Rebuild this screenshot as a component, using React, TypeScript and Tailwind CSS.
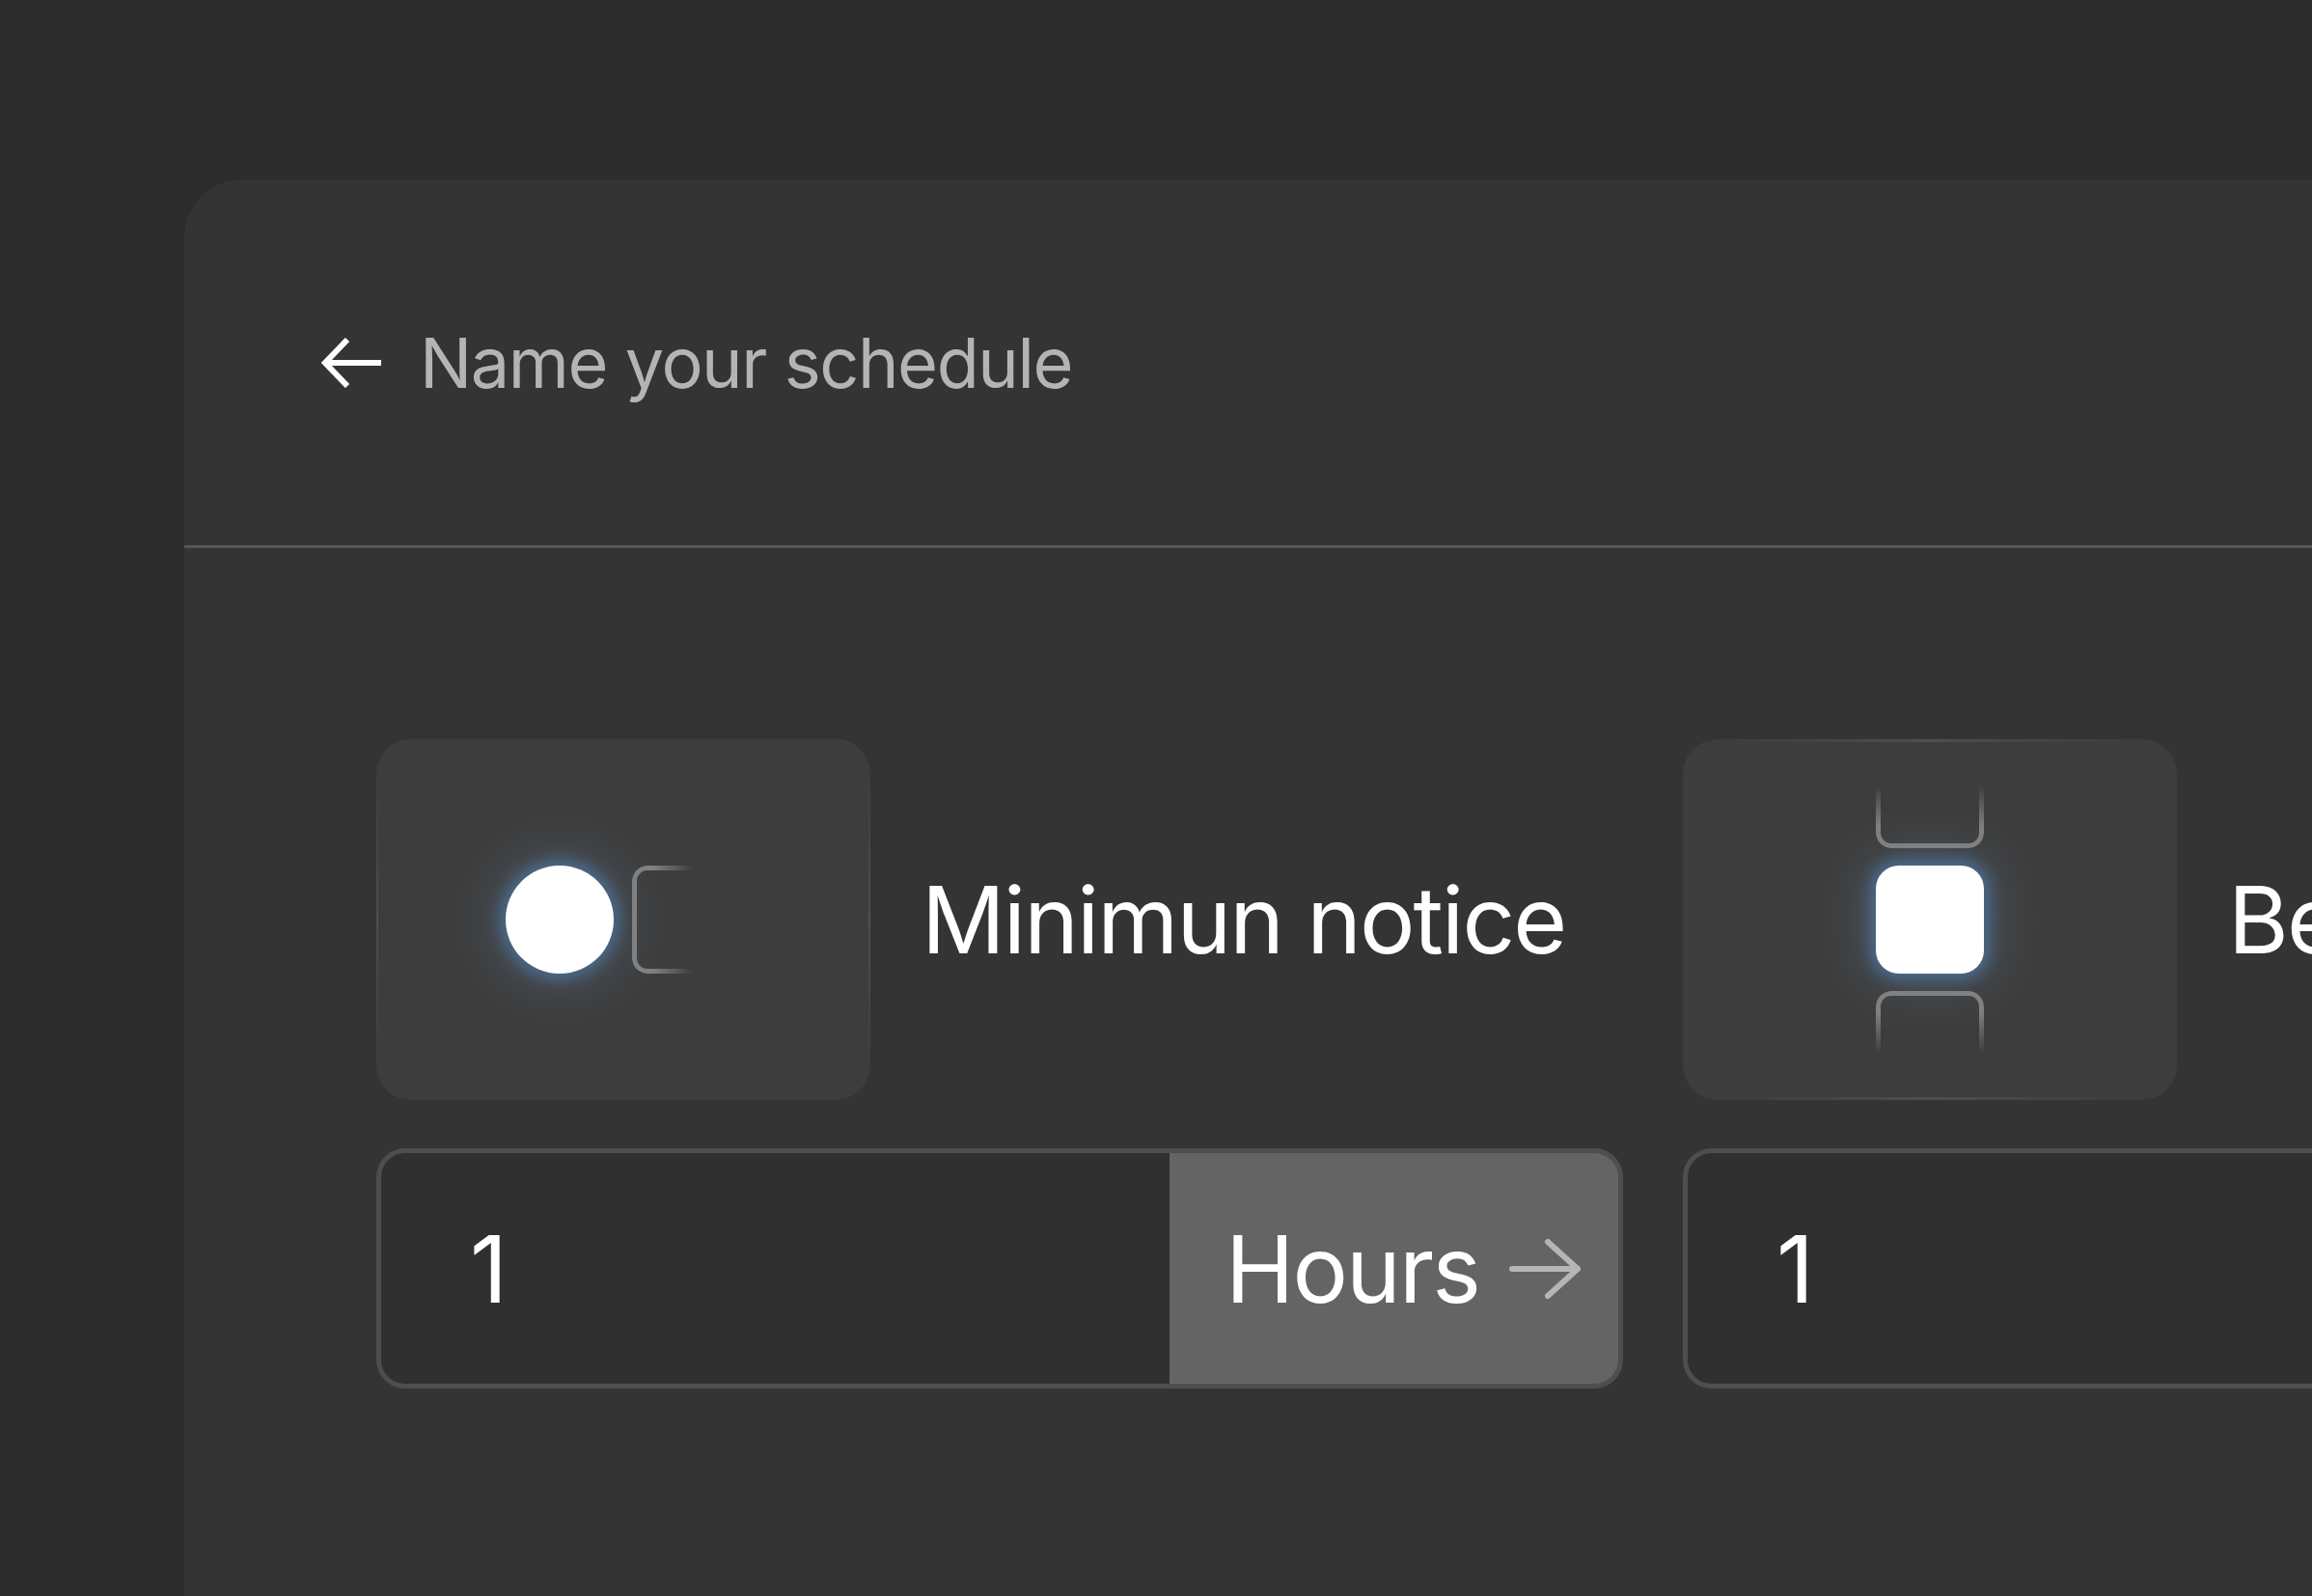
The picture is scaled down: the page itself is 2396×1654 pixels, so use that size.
import React from 'react';

const font = "font-['Inter',sans-serif]";

function EdgeLines({ dir }: { dir: 'x' | 'y' }) {
  if (dir === 'y') {
    return (
      <>
        <div className="absolute left-0 top-[10%] h-[80%] w-[2px] bg-gradient-to-b from-transparent via-[#4a5056] to-transparent" />
        <div className="absolute right-0 top-[10%] h-[80%] w-[2px] bg-gradient-to-b from-transparent via-[#4a5056] to-transparent" />
      </>
    );
  }
  return (
    <>
      <div className="absolute top-0 left-[10%] w-[80%] h-[3px] bg-gradient-to-r from-transparent via-[#4a5056] to-transparent" />
      <div className="absolute bottom-0 left-[10%] w-[80%] h-[3px] bg-gradient-to-r from-transparent via-[#4a5056] to-transparent" />
    </>
  );
}

function ArrowRightIcon() {
  return (
    <svg width="76" height="64" viewBox="0 0 76 64" fill="none" stroke="#b5b5b5" strokeWidth="6" strokeLinecap="round" strokeLinejoin="round">
      <path d="M4 32H72" />
      <path d="M41 4L72 32L41 60" />
    </svg>
  );
}

function MinimumIcon() {
  return (
    <div className="relative w-[512px] h-[374px] shrink-0 rounded-[36px] bg-[#3d3d3d]">
      <EdgeLines dir="y" />
      <div className="h-full flex items-center pl-[134px] gap-[19px]">
        <div className="w-[112px] h-[112px] rounded-full bg-white shadow-[0_0_14px_6px_rgba(74,110,145,0.9),0_0_50px_14px_rgba(110,150,190,0.28)]" />
        <div className="w-[64px] h-[112px] rounded-l-[16px] border-[5px] border-r-0 border-[#808080] [mask-image:linear-gradient(to_right,black_35%,transparent)]" />
      </div>
    </div>
  );
}

function BufferIcon() {
  return (
    <div className="relative w-[512px] h-[374px] shrink-0 rounded-[36px] bg-[#3d3d3d]">
      <EdgeLines dir="x" />
      <div className="h-full flex flex-col items-center justify-center gap-[18px]">
        <div className="w-[112px] h-[65px] rounded-b-[16px] border-[5px] border-t-0 border-[#808080] [mask-image:linear-gradient(to_top,black_35%,transparent)]" />
        <div className="w-[112px] h-[112px] rounded-[24px] bg-white shadow-[0_0_14px_6px_rgba(74,110,145,0.9),0_0_50px_14px_rgba(110,150,190,0.28)]" />
        <div className="w-[112px] h-[65px] rounded-t-[16px] border-[5px] border-b-0 border-[#808080] [mask-image:linear-gradient(to_bottom,black_35%,transparent)]" />
      </div>
    </div>
  );
}

function Setting({ icon, label }: { icon: React.ReactNode; label: string }) {
  return (
    <div className="w-[1292px] shrink-0">
      <div className="flex items-center gap-[53px]">
        {icon}
        <span className="text-[96px] leading-none text-white tracking-[-0.02em] whitespace-nowrap">{label}</span>
      </div>
      <div className="mt-[50px] h-[249px] flex rounded-[30px] overflow-hidden border-[5px] border-[#4b4f52] bg-[#303030]">
        <div className="flex-1 flex items-center pl-[92px] text-[96px] leading-none text-white">1</div>
        <div className="w-[470px] -my-[5px] -mr-[5px] flex items-center pl-[58px] gap-[30px] bg-[#646464] border-[5px] border-l-0 border-[#808080] rounded-r-[30px]">
          <span className="text-[96px] leading-none text-white tracking-[-0.02em]">Hours</span>
          <ArrowRightIcon />
        </div>
      </div>
    </div>
  );
}

export default function App() {
  return (
    <div className={`w-[2396px] h-[1654px] overflow-hidden bg-[#2c2c2c] pl-[191px] pt-[186px] ${font}`}>
      <div className="w-[2600px] h-[1600px] rounded-tl-[60px] bg-[#343434]">
        <div className="h-[382px] flex items-center pl-[142px] gap-[40px] border-b-[3px] border-[#565656]">
          <svg width="62" height="52" viewBox="0 0 62 52" fill="none" stroke="#ffffff" strokeWidth="6" strokeLinejoin="miter">
            <path d="M62 26H4" />
            <path d="M27 2L4 26L27 50" />
          </svg>
          <span className="text-[72px] leading-none text-[#b4b4b4] tracking-[-0.02em]">Name your schedule</span>
        </div>
        <div className="pl-[199px] pt-[198px] flex gap-[62px]">
          <Setting icon={<MinimumIcon />} label="Minimun notice" />
          <Setting icon={<BufferIcon />} label="Before event" />
        </div>
      </div>
    </div>
  );
}
